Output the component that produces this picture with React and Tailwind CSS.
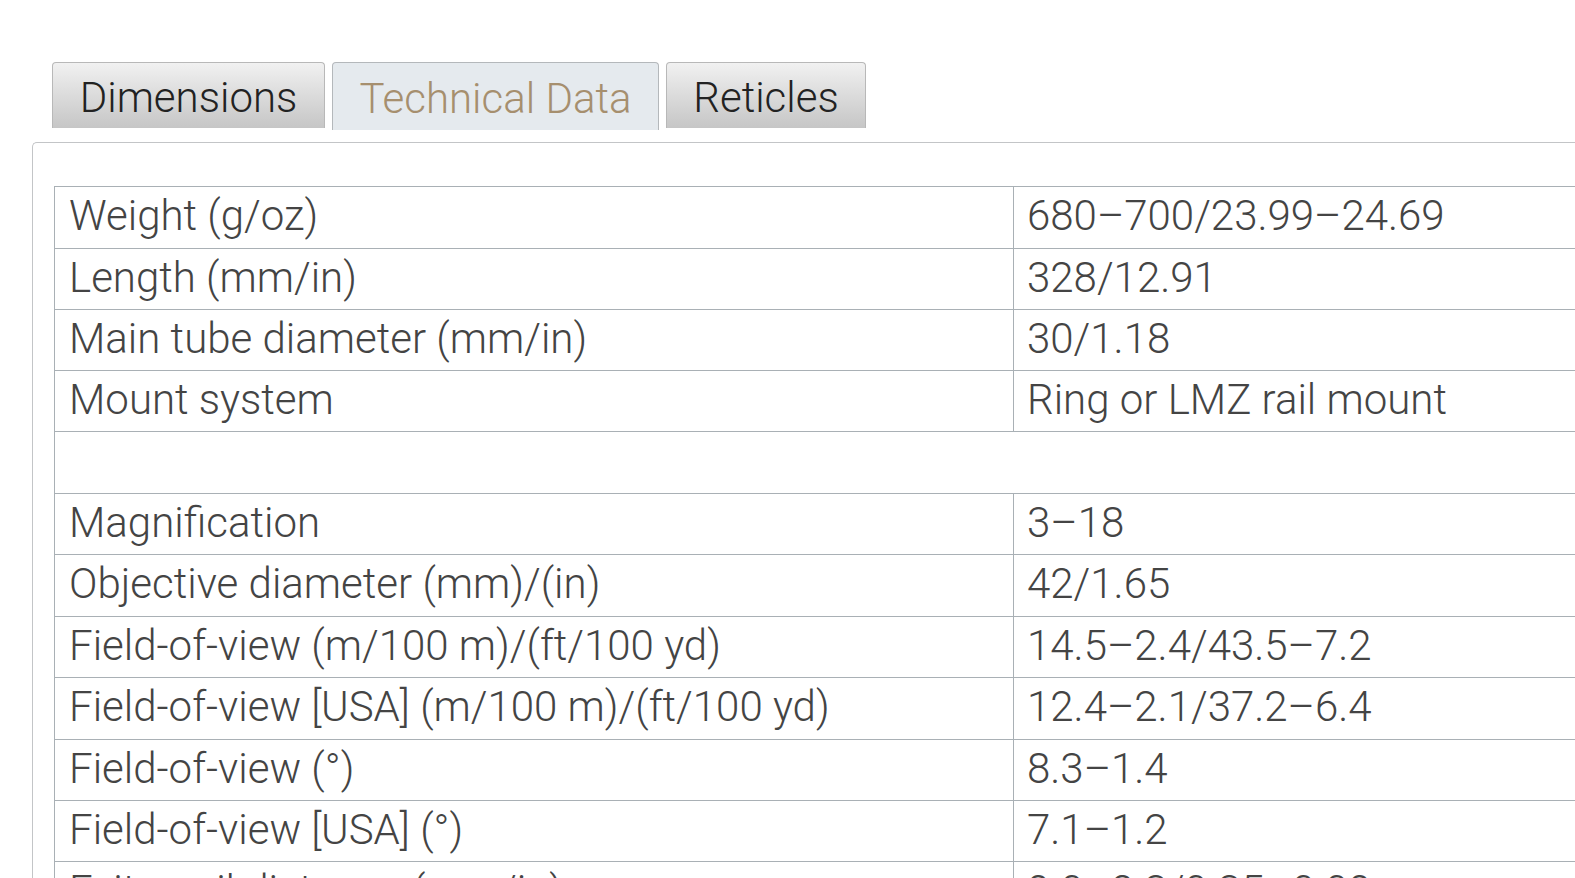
import React from 'react';

const rows = [
  ['Weight (g/oz)', '680–700/23.99–24.69'],
  ['Length (mm/in)', '328/12.91'],
  ['Main tube diameter (mm/in)', '30/1.18'],
  ['Mount system', 'Ring or LMZ rail mount'],
  null,
  ['Magnification', '3–18'],
  ['Objective diameter (mm)/(in)', '42/1.65'],
  ['Field-of-view (m/100 m)/(ft/100 yd)', '14.5–2.4/43.5–7.2'],
  ['Field-of-view [USA] (m/100 m)/(ft/100 yd)', '12.4–2.1/37.2–6.4'],
  ['Field-of-view (°)', '8.3–1.4'],
  ['Field-of-view [USA] (°)', '7.1–1.2'],
  ['Exit pupil distance (mm/in)', '9.0–2.3/0.35–0.09'],
];

const tabs = [
  { label: 'Dimensions', w: 'w-[273px]' },
  { label: 'Technical Data', w: 'w-[327px]', active: true },
  { label: 'Reticles', w: 'w-[200px]' },
];

export default function App() {
  return (
    <div className="h-[878px] w-[1575px] overflow-hidden bg-white font-['Roboto',sans-serif] font-light">
      <div className="pl-[32px] pt-[62px]">
        {/* Tabs */}
        <div className="ml-[20px] flex items-start gap-[7px]">
          {tabs.map((t) =>
            t.active ? (
              <div
                key={t.label}
                className={`${t.w} flex h-[68px] items-center justify-center rounded-t-[4px] border border-b-0 border-[#b4b8bb] bg-[#e5eaee] pt-[3px] text-[42px] text-[#a68f6e]`}
              >
                {t.label}
              </div>
            ) : (
              <div
                key={t.label}
                className={`${t.w} flex h-[66px] items-center justify-center rounded-t-[4px] border border-b-0 border-[#b8b8b8] bg-gradient-to-b from-[#f1f1f1] to-[#c6c6c6] pt-[3px] text-[42px] text-[#222]`}
              >
                {t.label}
              </div>
            )
          )}
        </div>

        {/* Panel */}
        <div className="mt-[12px] w-[1600px] rounded-tl-[5px] border-l border-t border-[#c3c5c7] pl-[21px] pt-[43px]">
          <table className="w-[1560px] border-collapse text-[42px] text-[#444]">
            <tbody>
              {rows.map((r, i) => {
                const h = i === 0 || i === 4 || i === 6 || i === 8 ? 'h-[62px]' : 'h-[61px]';
                return r ? (
                  <tr key={i} className={h}>
                    <td className="w-[959px] border border-[#a9b0b5] px-[14px] pt-0 pb-[3px] leading-none">{r[0]}</td>
                    <td className="border border-[#a9b0b5] px-[13px] pt-0 pb-[3px] leading-none">{r[1]}</td>
                  </tr>
                ) : (
                  <tr key={i} className={h}>
                    <td colSpan={2} className="border border-[#a9b0b5]"></td>
                  </tr>
                );
              })}
            </tbody>
          </table>
        </div>
      </div>
    </div>
  );
}
